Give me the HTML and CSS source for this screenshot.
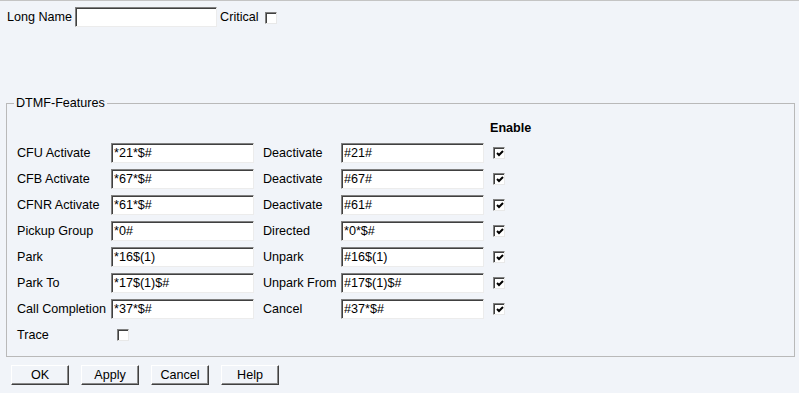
FILE: index.html
```html
<!DOCTYPE html>
<html lang="en">

<head>
    <meta charset="UTF-8">
    <title>DTMF Features</title>
    <link rel="stylesheet" href="styles.css">
</head>

<body>
    <div class="page">

        <div class="top-row">
            <label for="longName">Long Name</label>
            <input type="text" id="longName" class="field">
            <label for="critical">Critical</label>
            <input type="checkbox" id="critical" class="chk">
        </div>

        <fieldset class="dtmf">
            <legend>DTMF-Features</legend>
            <div class="feature-grid">
                <span class="enable-head">Enable</span>

                <label>CFU Activate</label>
                <input type="text" class="field" value="*21*$#">
                <label class="lbl2">Deactivate</label>
                <input type="text" class="field" value="#21#">
                <input type="checkbox" class="chk enable" checked>

                <label>CFB Activate</label>
                <input type="text" class="field" value="*67*$#">
                <label class="lbl2">Deactivate</label>
                <input type="text" class="field" value="#67#">
                <input type="checkbox" class="chk enable" checked>

                <label>CFNR Activate</label>
                <input type="text" class="field" value="*61*$#">
                <label class="lbl2">Deactivate</label>
                <input type="text" class="field" value="#61#">
                <input type="checkbox" class="chk enable" checked>

                <label>Pickup Group</label>
                <input type="text" class="field" value="*0#">
                <label class="lbl2">Directed</label>
                <input type="text" class="field" value="*0*$#">
                <input type="checkbox" class="chk enable" checked>

                <label>Park</label>
                <input type="text" class="field" value="*16$(1)">
                <label class="lbl2">Unpark</label>
                <input type="text" class="field" value="#16$(1)">
                <input type="checkbox" class="chk enable" checked>

                <label>Park To</label>
                <input type="text" class="field" value="*17$(1)$#">
                <label class="lbl2">Unpark From</label>
                <input type="text" class="field" value="#17$(1)$#">
                <input type="checkbox" class="chk enable" checked>

                <label>Call Completion</label>
                <input type="text" class="field" value="*37*$#">
                <label class="lbl2">Cancel</label>
                <input type="text" class="field" value="#37*$#">
                <input type="checkbox" class="chk enable" checked>

                <label>Trace</label>
                <input type="checkbox" class="chk trace">
            </div>
        </fieldset>

        <div class="buttons">
            <button class="btn">OK</button>
            <button class="btn">Apply</button>
            <button class="btn">Cancel</button>
            <button class="btn">Help</button>
        </div>

    </div>
</body>

</html>
```

FILE: styles.css
```css
body {
    margin: 0;
    background-color: #f1f4f9;
    font-family: "Liberation Sans", Arial, sans-serif;
    font-size: 12.6px;
    line-height: 14px;
    color: #000;
}

.page {
    border-top: 1px solid #c4c4c4;
    padding: 6px 4px 0 6px;
}

.top-row {
    display: flex;
    align-items: center;
    height: 20px;
    padding-left: 1px;
}

.top-row .field {
    width: 142px;
    margin: 0 3px;
}

.top-row .chk {
    margin: 1px 0 0 6px;
}

.field {
    box-sizing: border-box;
    height: 20px;
    margin: 0;
    padding: 0 2px;
    font: inherit;
    color: #000;
    background-color: #fff;
    border: 1px solid;
    border-color: #808080 #ececec #ececec #808080;
    box-shadow: inset 1px 1px 0 #404040;
    outline: none;
}

.chk {
    appearance: none;
    -webkit-appearance: none;
    box-sizing: border-box;
    width: 12px;
    height: 12px;
    margin: 0;
    background-color: #fff;
    background-repeat: no-repeat;
    background-position: center;
    border: 1px solid;
    border-color: #808080 #e8e8e8 #e8e8e8 #808080;
    box-shadow: inset 1px 1px 0 #404040;
}

.chk:checked {
    background-image: url("data:image/svg+xml,%3Csvg xmlns='http://www.w3.org/2000/svg' width='8' height='7' viewBox='0 0 8 7'%3E%3Cpath d='M1 3l2 2 4-4' fill='none' stroke='%23000' stroke-width='2'/%3E%3C/svg%3E");
    background-position: 2px 2px;
}

.dtmf {
    margin: 69px 0 0 0;
    padding: 11px 0 11px 7px;
    border: 1px solid #b9b9b9;
}

.dtmf legend {
    padding: 0 2px;
}

.feature-grid {
    display: grid;
    grid-template-columns: 94px 143px 87px 143px auto;
    row-gap: 6px;
    margin-left: 3px;
    align-items: center;
}

.feature-grid label {
    height: 20px;
    line-height: 20px;
    white-space: nowrap;
}

.feature-grid .lbl2 {
    padding-left: 9px;
}

.enable-head {
    grid-column: 5;
    margin-left: 6px;
    margin-bottom: 2px;
    font-weight: bold;
    white-space: nowrap;
}

.enable {
    margin-left: 9px;
}

.trace {
    margin-left: 6px;
}

.buttons {
    display: flex;
    gap: 12px;
    margin: 8px 0 0 5px;
}

.btn {
    box-sizing: border-box;
    width: 58px;
    height: 20px;
    padding: 0;
    font: inherit;
    color: #000;
    background-color: #f1f4f9;
    border: 1px solid;
    border-color: #ffffff #404040 #404040 #ffffff;
    box-shadow: inset -1px -1px 0 #8a8a8a;
    cursor: pointer;
}
```
